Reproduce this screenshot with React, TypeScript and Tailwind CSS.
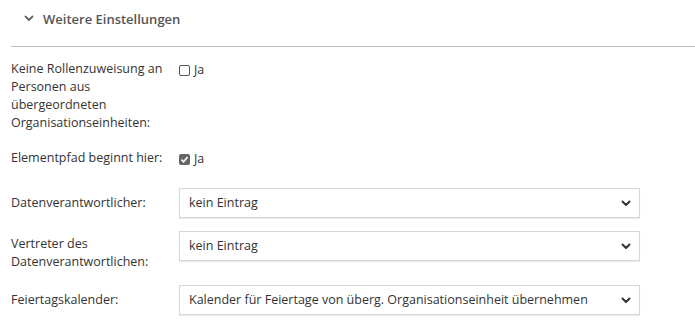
import React from "react";

function Chevron() {
  return (
    <svg width="10" height="7" viewBox="0 0 10 7" className="shrink-0">
      <path d="M1.5 1.5 L5 5 L8.5 1.5" fill="none" stroke="#333" strokeWidth="2" strokeLinecap="round" strokeLinejoin="round" />
    </svg>
  );
}

function FakeSelect({ value }: { value: string }) {
  return (
    <div className="flex h-[30px] w-[461px] items-center justify-between border border-[#d6d6d6] bg-white pl-[9px] pr-[8px] shadow-[0_1px_1px_rgba(0,0,0,0.08)]">
      <span className="text-[#333]">{value}</span>
      <Chevron />
    </div>
  );
}

function Check({ checked }: { checked: boolean }) {
  return (
    <div className="flex items-center gap-[4px] pt-[1px]">
      {checked ? (
        <span className="flex h-[11px] w-[11px] items-center justify-center rounded-[2px] bg-[#666]">
          <svg width="9" height="9" viewBox="0 0 9 9">
            <path d="M1.5 4.6 L3.6 6.7 L7.6 2" fill="none" stroke="#fff" strokeWidth="1.6" />
          </svg>
        </span>
      ) : (
        <span className="h-[11px] w-[11px] rounded-[2px] border border-[#555] bg-white" />
      )}
      <span className="text-[#333]">Ja</span>
    </div>
  );
}

export default function App() {
  return (
    <div className="h-[328px] w-[695px] bg-white text-[12.5px] leading-[18px] text-[#333]" style={{ fontFamily: '"Open Sans", "Liberation Sans", sans-serif' }}>
      <div className="flex h-[36px] items-center pl-[24px] pt-[1px]">
        <svg width="10" height="7" viewBox="0 0 10 7" className="mr-[9px]">
          <path d="M1.5 1.5 L5 5 L8.5 1.5" fill="none" stroke="#666" strokeWidth="1.8" strokeLinecap="round" strokeLinejoin="round" />
        </svg>
        <span className="text-[13px] font-semibold text-[#555]">Weitere Einstellungen</span>
      </div>
      <div className="ml-[11px] mt-[10px] border-t border-[#bdbdbd]" />
      <div className="px-[11px] pt-[13px]">
        <div className="flex items-start">
          <div className="w-[168px] pr-2">
            Keine Rollenzuweisung an Personen aus übergeordneten Organisationseinheiten:
          </div>
          <Check checked={false} />
        </div>
        <div className="mt-[17px] flex items-start">
          <div className="w-[168px] pr-2">Elementpfad beginnt hier:</div>
          <Check checked={true} />
        </div>
        <div className="mt-[20px] flex items-start">
          <div className="w-[168px] pr-2 pt-[6px]">Datenverantwortlicher:</div>
          <FakeSelect value="kein Eintrag" />
        </div>
        <div className="mt-[13px] flex items-start">
          <div className="w-[168px] pr-2 pt-[4px]">Vertreter des Datenverantwortlichen:</div>
          <FakeSelect value="kein Eintrag" />
        </div>
        <div className="mt-[14px] flex items-start">
          <div className="w-[168px] pr-2 pt-[6px]">Feiertagskalender:</div>
          <FakeSelect value="Kalender für Feiertage von überg. Organisationseinheit übernehmen" />
        </div>
      </div>
    </div>
  );
}
